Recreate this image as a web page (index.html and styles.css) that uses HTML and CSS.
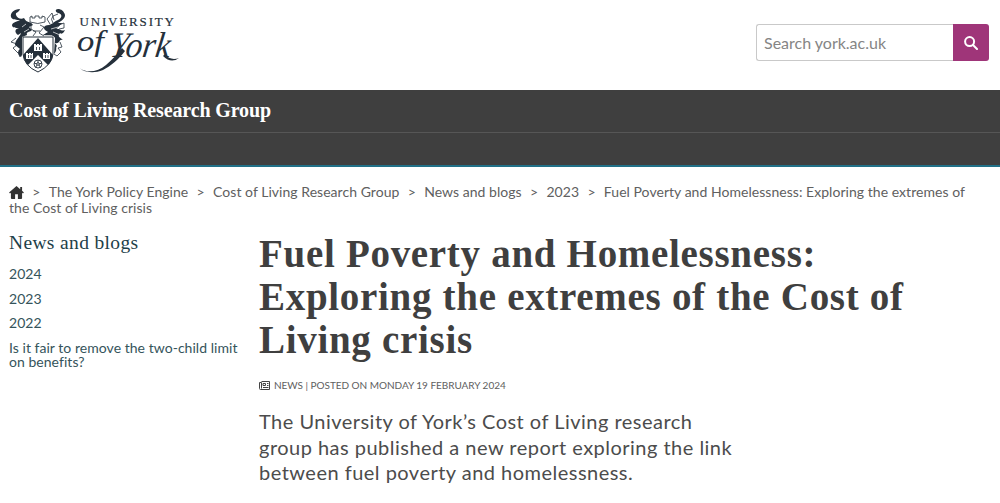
FILE: index.html
```html
<!DOCTYPE html>
<html lang="en">
<head>
    <meta charset="UTF-8">
    <meta name="viewport" content="width=device-width, initial-scale=1.0">
    <title>Fuel Poverty and Homelessness - Cost of Living Research Group, University of York</title>
    <link rel="stylesheet" href="styles.css">
</head>
<body>
    <header class="masthead">
        <a class="logo" href="#">
            <svg width="172" height="68" viewBox="8 6 172 68">
                <!-- mantling -->
                <g>
                    <path d="M20 9C14 9 10 13 11 17C12 20 17 20 20 20C16 22 13 22 12 25C12 28 16 28 19 28C15 29 14 32 18 35L21 33C20 37 15 40 15 45L20 49C17 51 18 55 21 57L22 55V37L27 35C26 31 29 33 32 30L29 27L33 25C30 20 27 24 24 18C21 20 17 18 16 15C15 12 19 13 20 9Z"/>
                    <path d="M58 9C55 9 55 12 58 13C63 14 62 18 58 20C53 22 53 24 49 25C43 25 42 29 48 32L43 35C48 36 53 34 55 38L54 54C58 50 55 48 57 46L55 43C61 44 58 39 63 40C60 37 57 37 60 33C62 35 64 32 65 30C60 32 60 28 56 29C60 26 59 25 63 23L58 23C61 21 65 19 65 15C64 11 61 9 58 9Z"/>
                </g>
                <g fill="none" stroke="#25303b" stroke-width=".8">
                    <path d="M30 17l2-1v2h3v-2h4v2h3v-2l3 1v5q-7 3-15 0z M31 25v4l5 3-3 4 M40 25l4 2-5 6 5 3M33 31h7"/>
                    <path d="M53 23q-3-4 0-7l5-2M54 20l-2-7-5 6 3 5M59 25l5-2v5l-5 1M16 38l-5 4 6 2M17 45l-4 3 5 5M18 52l2 5M60 42l2 5-4 1 3 4-4 4-3-2"/>
                </g>
                <path d="M22 27l4-3M24 32l5-3M53 32l7 3M51 29l7-2" stroke="#fff" stroke-width=".7"/>
                <!-- shield -->
                <path d="M23 37H53V54Q52 65 38 72Q24 66 23 54Z" fill="#fff" stroke="#25303b"/>
                <path d="M38 38L53 55Q52 61 48 65L38 55L28 65Q24 61 23 55Z" fill="#25303b"/>
                <g fill="#fff">
                    <path d="M34 44h2v1h1v-1h2v1h1v-1h2v7h-8z"/>
                    <path d="M26 53h2v1h1v-1h2v1h1v-1h1v6h-7z"/>
                    <path d="M43 53h2v1h1v-1h2v1h1v-1h1v6h-7z"/>
                </g>
                <path d="M36.500 50v-3M39.500 50v-3M28.500 58v-3M31 58v-3M45.500 58v-3M48 58v-3" stroke="#25303b" stroke-width=".8"/>
                <g fill="none" stroke="#25303b" stroke-width=".9">
                    <circle cx="38" cy="64" r="4"/>
                    <circle cx="38" cy="64" r="1.300"/>
                    <path d="M38 60v3M42 63l-3 1M40.500 67.500L39 65M35.500 67.500L37 65M34 63l3 1"/>
                </g>
                <text class="logo-name" x="79.500" y="26" textLength="94.500">UNIVERSITY</text>
                <text class="logo-script" x="77" y="51" font-size="29" textLength="27" lengthAdjust="spacingAndGlyphs">of</text>
                <text class="logo-script" transform="translate(109 57) skewX(-8)" font-size="36" textLength="60" lengthAdjust="spacingAndGlyphs">York</text>
                <!-- pen swashes under and after the name -->
                <path d="M77 64C80 73 96 74 106 65C113 59 118 53 122 48L125 51C119 59 111 66 103 70C91 75 79 71 77 64Z"/>
                <path d="M165 54Q170 61 179 58Q171 64 163 56Z"/>
            </svg>
        </a>
        <form class="search">
            <input class="search-input" type="text" placeholder="Search york.ac.uk">
            <button class="search-button" type="button" aria-label="Search">
                <svg width="14" height="14" viewBox="0 0 14 14">
                    <circle cx="5.600" cy="5.600" r="4.500"/>
                    <path d="M9 9l4 4"/>
                </svg>
            </button>
        </form>
    </header>

    <div class="site-banner">
        <a class="site-title" href="#">Cost of Living Research Group</a>
        <nav class="site-nav"></nav>
    </div>

    <nav class="breadcrumb">
        <a href="#" aria-label="Home"><svg class="home" width="15" height="13" viewBox="0 0 16 14"><path d="M8 0L0 7l1 1 1-.8V13q0 1 1 1h3.500V9h3v5H13q1 0 1-1V7.200l1 .8 1-1-2-1.800V1h-2v2.500z"/></svg></a><span class="sep">&gt;</span><a href="#">The York Policy Engine</a><span class="sep">&gt;</span><a href="#">Cost of Living Research Group</a><span class="sep">&gt;</span><a href="#">News and blogs</a><span class="sep">&gt;</span><a href="#">2023</a><span class="sep">&gt;</span>Fuel Poverty and Homelessness: Exploring the extremes of<br>the Cost of Living crisis
    </nav>

    <div class="content">
        <aside class="sidebar">
            <h2><a href="#">News and blogs</a></h2>
            <ul>
                <li><a href="#">2024</a></li>
                <li><a href="#">2023</a></li>
                <li><a href="#">2022</a></li>
                <li><a href="#">Is it fair to remove the two-child limit<br>on benefits?</a></li>
            </ul>
        </aside>
        <main class="article">
            <h1>Fuel Poverty and Homelessness:<br>Exploring the extremes of the Cost of<br>Living crisis</h1>
            <p class="meta">
                <svg width="11" height="9" viewBox="0 0 11 9"><path d="M2.500 .5h8v8h-9q-1 0-1-1v-6h2v6M4 2.500h2.500v2H4zM8 2.500h1.500M8 4.500h1.500M4 6.500h5.500"/></svg>
                <span>News | Posted on Monday 19 February 2024</span>
            </p>
            <p class="intro">The University of York’s Cost of Living research<br>group has published a new report exploring the link<br>between fuel poverty and homelessness.</p>
        </main>
    </div>
</body>
</html>
```
FILE: styles.css
```css
body {
    margin: 0;
    background-color: #fff;
    color: #3f3f3f;
    font-family: Lato, "Open Sans", sans-serif;
    font-size: 14px;
    overflow: hidden;
}
a {
    color: inherit;
    text-decoration: none;
}
.masthead {
    display: flex;
    justify-content: space-between;
    align-items: flex-start;
    height: 90px;
    padding: 6px 11px 0 8px;
    box-sizing: border-box;
}
.logo svg {
    display: block;
    fill: #25303b;
}
.logo-name {
    font-family: "Liberation Serif", serif;
    font-size: 13px;
    stroke: #25303b;
    stroke-width: 0.2px;
}
.logo-script {
    font-family: "Liberation Serif", serif;
    font-style: italic;
}
.search {
    display: flex;
    width: 233px;
    height: 37px;
    margin-top: 18px;
}
.search-input {
    flex: 1;
    min-width: 0;
    padding: 0 7px 1px;
    border: 1px solid #c9c9c9;
    border-right: 0;
    border-radius: 3px 0 0 3px;
    font-family: Lato, sans-serif;
    font-size: 16px;
    color: #858585;
}
.search-input::placeholder {
    color: #858585;
}
.search-button {
    display: flex;
    align-items: center;
    justify-content: center;
    width: 36px;
    padding: 0;
    border: 0;
    border-radius: 0 3px 3px 0;
    background-color: #9f3579;
}
.search-button svg {
    fill: none;
    stroke: #fff;
    stroke-width: 2;
    stroke-linecap: round;
}
.site-banner {
    background-color: #3f3f3f;
    border-bottom: 2px solid #217087;
}
.site-title {
    display: block;
    height: 42px;
    padding-left: 9px;
    border-bottom: 1px solid #565656;
    color: #fff;
    font-family: "Liberation Serif", serif;
    font-size: 20px;
    font-weight: bold;
    letter-spacing: -0.14px;
    line-height: 41px;
}
.site-nav {
    height: 32px;
}
.breadcrumb {
    padding: 17px 9px 0;
    line-height: 16px;
    letter-spacing: 0.04px;
    color: #606060;
    white-space: nowrap;
}
.home {
    width: 15px;
    height: 13px;
    vertical-align: -2px;
    fill: #333;
}
.sep {
    margin: 0 8.3px;
}
.content {
    display: flex;
    padding: 13px 9px 0;
}
.sidebar {
    width: 250px;
    flex-shrink: 0;
    color: #35545b;
}
.sidebar h2 {
    margin: 1px 0 11px;
    font-family: "Liberation Serif", serif;
    font-size: 19.5px;
    font-weight: normal;
    color: #1d4049;
    letter-spacing: 0.35px;
    line-height: 26px;
}
.sidebar ul {
    margin: 0;
    padding: 0;
    list-style: none;
}
.sidebar li {
    margin-bottom: 10.5px;
    letter-spacing: 0.04px;
    line-height: 14px;
    white-space: nowrap;
}
.article h1 {
    margin: 3px 0 0;
    font-family: "Liberation Serif", serif;
    font-size: 39px;
    letter-spacing: 0.7px;
    line-height: 43px;
    white-space: nowrap;
}
.meta {
    display: flex;
    align-items: center;
    gap: 4px;
    margin: 17px 0 0;
    color: #606060;
    font-size: 10px;
    letter-spacing: -0.03px;
    line-height: 14px;
    text-transform: uppercase;
}
.meta svg {
    fill: none;
    stroke: #444;
}
.intro {
    margin: 17px 0 0;
    color: #4c4c4c;
    font-size: 20px;
    letter-spacing: 0.48px;
    line-height: 25.5px;
    white-space: nowrap;
}
```
